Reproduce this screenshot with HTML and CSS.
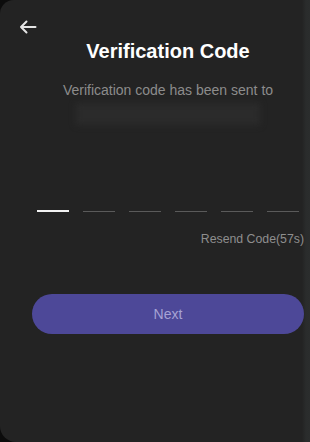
FILE: index.html
```html
<!DOCTYPE html>
<html lang="en">
<head>
<meta charset="utf-8">
<link rel="stylesheet" href="styles.css">
</head>
<body>
<div class="sheet">
  <div class="top">
    <svg class="back" width="20" height="20" viewBox="0 0 20 20" aria-hidden="true">
      <path d="M17.5 10H3M8.5 4.5L3 10l5.5 5.5" fill="none" stroke="#e4e4e4" stroke-width="2" stroke-linecap="round" stroke-linejoin="round"/>
    </svg>
  </div>
  <div class="content">
    <h1 class="title">Verification Code</h1>
    <p class="sub">Verification code has been sent to</p>
    <div class="masked"></div>
    <div class="code">
      <span class="slot active"></span>
      <span class="slot"></span>
      <span class="slot"></span>
      <span class="slot"></span>
      <span class="slot"></span>
      <span class="slot"></span>
    </div>
    <div class="resend">Resend Code(57s)</div>
    <button class="next">Next</button>
  </div>
</div>
</body>
</html>
```
FILE: styles.css
```css
html, body {
  margin: 0;
  padding: 0;
  background: #0c0c0c;
  font-family: "Liberation Sans", Arial, sans-serif;
}
.sheet {
  width: 310px;
  height: 442px;
  box-sizing: border-box;
  background: linear-gradient(to right, #232323 0, #232323 302px, #2a2c2c 306px, #2b2d2d 310px);
  border-radius: 14px 0 0 16px;
  overflow: hidden;
}
.top {
  padding: 17px 0 0 18px;
  height: 20px;
}
.back {
  display: block;
}
.content {
  padding: 0 6px 0 32px;
  display: flex;
  flex-direction: column;
  align-items: center;
}
.title {
  margin: 2px 0 0;
  font-size: 20px;
  line-height: 24px;
  font-weight: bold;
  color: #ffffff;
}
.sub {
  margin: 17px 0 0;
  font-size: 14px;
  line-height: 20px;
  color: #8c8c8c;
}
.masked {
  width: 184px;
  height: 22px;
  margin-top: 3px;
  background: #2b2b2b;
  filter: blur(3px);
}
.code {
  margin-top: 86px;
  display: flex;
  gap: 14px;
}
.slot {
  width: 32px;
  height: 1px;
  background: #5a5a5a;
}
.slot.active {
  background: #f2f2f2;
  height: 2px;
  margin-top: -1px;
}
.resend {
  align-self: flex-end;
  margin-top: 19px;
  font-size: 12.3px;
  line-height: 16px;
  color: #8e8e8e;
}
.next {
  margin-top: 47px;
  width: 100%;
  height: 40px;
  border: 0;
  border-radius: 20px;
  background: #4d4898;
  color: #a6a2d4;
  font-family: "Liberation Sans", Arial, sans-serif;
  font-size: 14px;
}
```
